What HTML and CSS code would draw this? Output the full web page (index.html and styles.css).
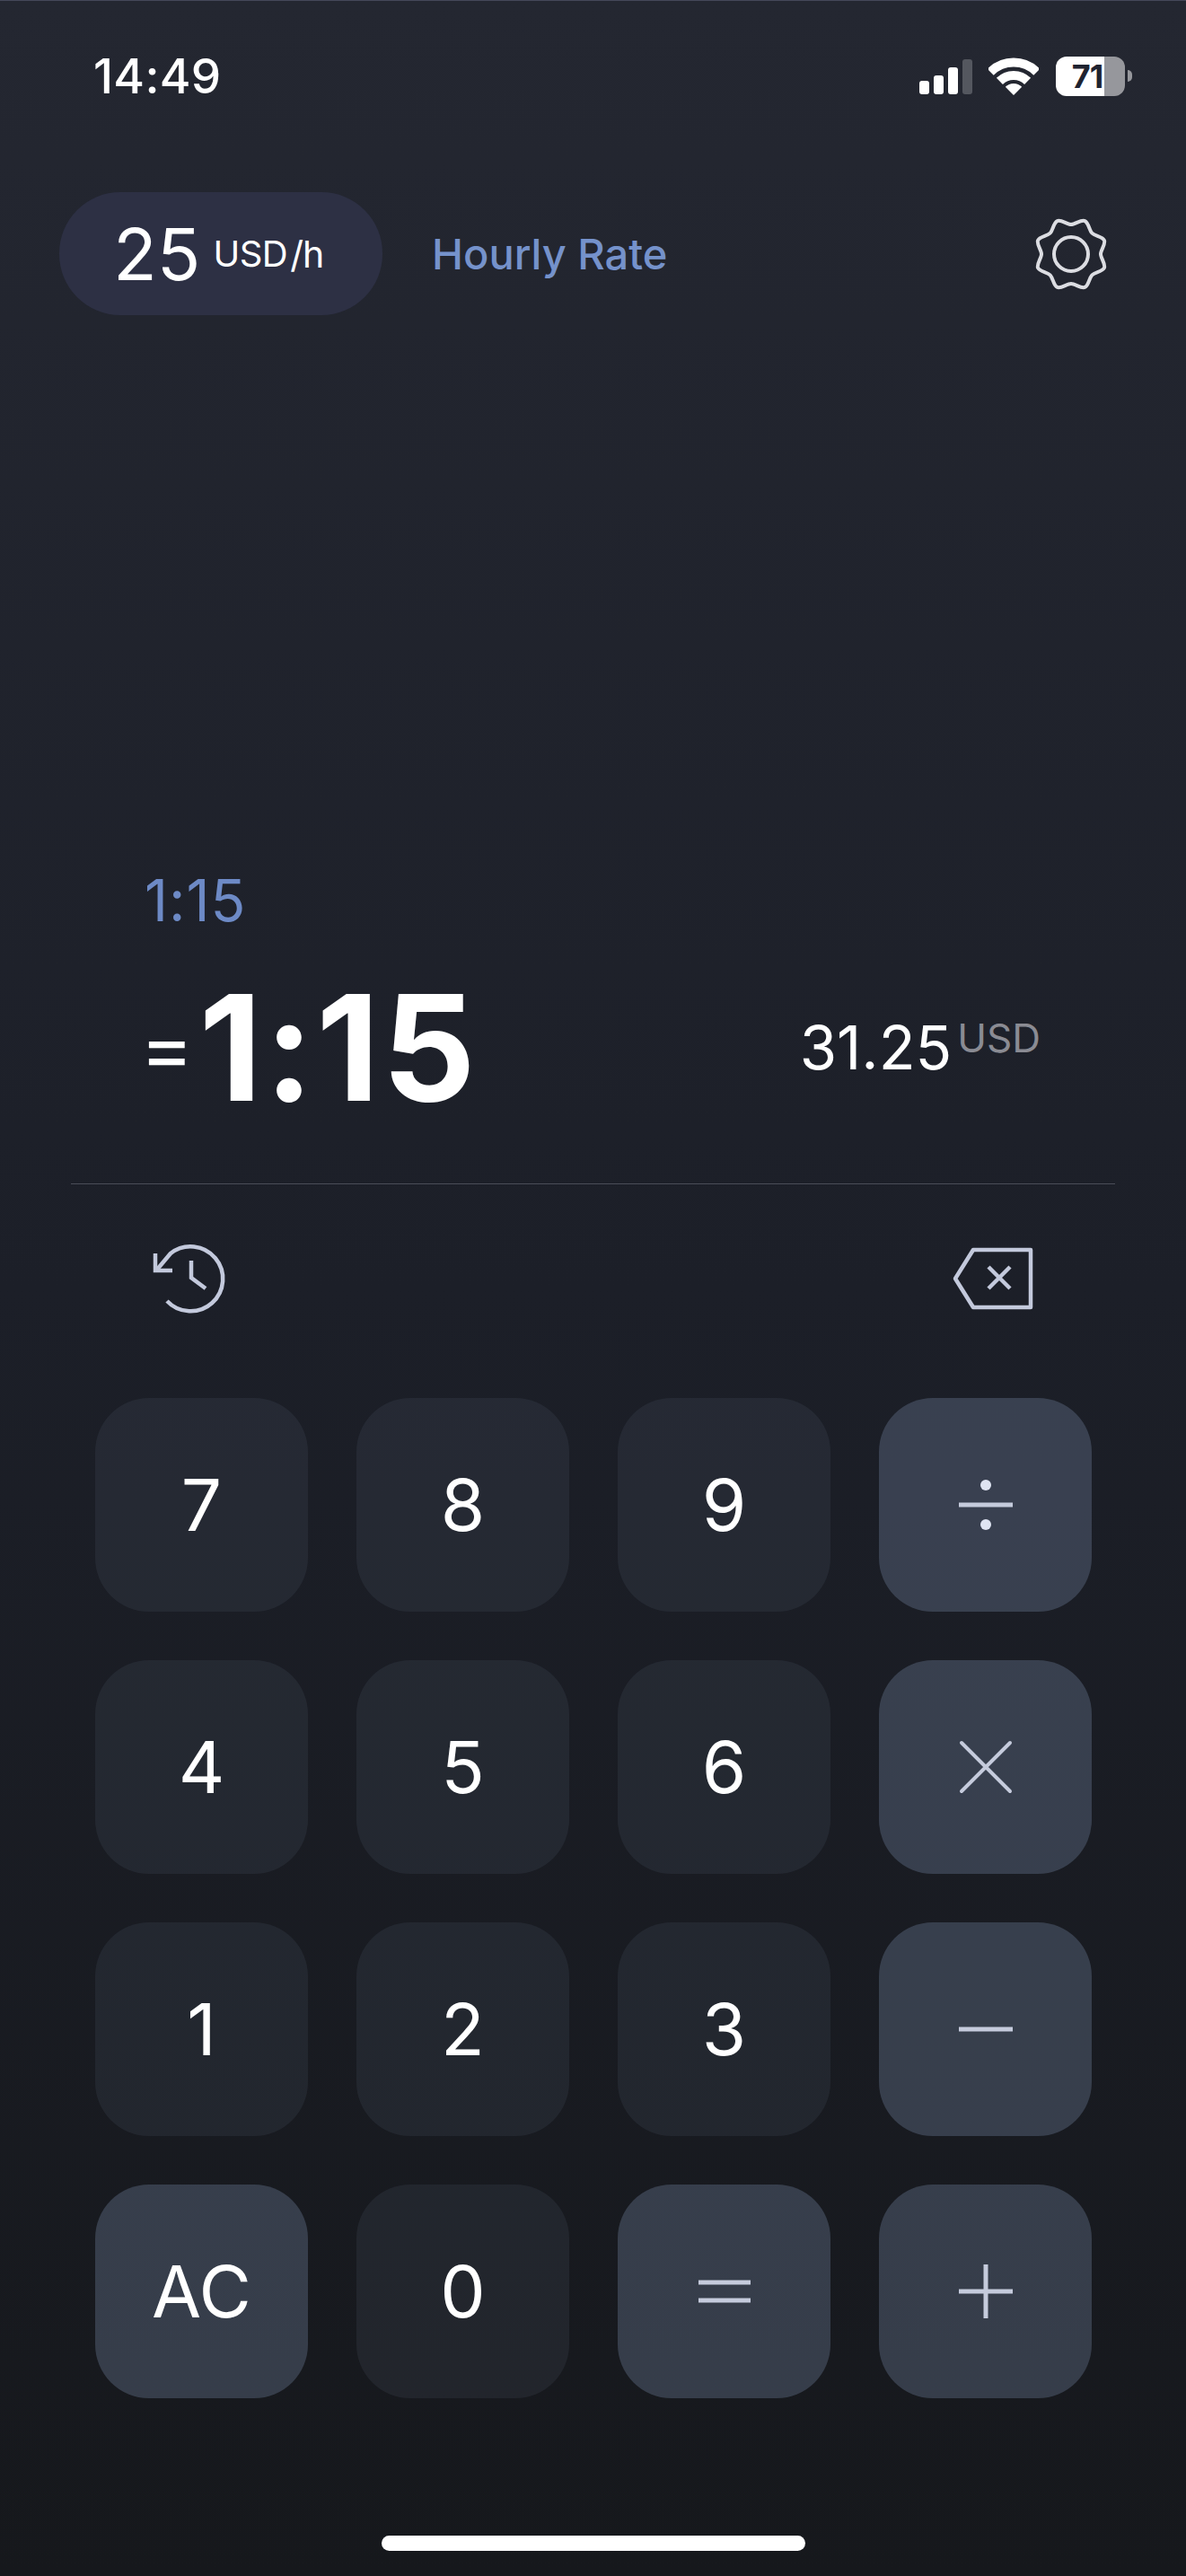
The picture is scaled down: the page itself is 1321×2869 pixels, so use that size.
FILE: index.html
```html
<!DOCTYPE html>
<html lang="en">
<head>
    <meta charset="UTF-8">
    <meta name="viewport" content="width=device-width, initial-scale=1.0">
    <title>Hourly Rate Calculator</title>
    <link rel="stylesheet" href="styles.css">
</head>
<body>

<div class="status-bar">
    <span class="clock">14:49</span>
    <div class="status-icons">
        <div class="signal">
            <span class="bar bar-1"></span>
            <span class="bar bar-2"></span>
            <span class="bar bar-3"></span>
            <span class="bar bar-4"></span>
        </div>
        <svg class="wifi" width="56" height="43" viewBox="0 0 56 43" fill="none" stroke="#fff" stroke-width="10">
            <path d="M2.2 17.2A36.5 36.5 0 0 1 53.8 17.2"/>
            <path d="M12.4 27.4A22 22 0 0 1 43.6 27.4"/>
            <path d="M28 43L18.8 33.8A13 13 0 0 1 37.2 33.8Z" fill="#fff" stroke="none"/>
        </svg>
        <div class="battery">
            <div class="battery-body">71</div>
            <span class="battery-cap"></span>
        </div>
    </div>
</div>

<header class="rate-row">
    <div class="rate-pill">
        <span class="rate-value">25</span>
        <span class="rate-unit">USD</span>
        <span class="rate-per">/h</span>
    </div>
    <span class="rate-label">Hourly Rate</span>
    <svg class="gear" width="82" height="82" viewBox="-41 -41 82 82" fill="none" stroke="#dcdde2" stroke-width="4">
        <path d="M0 -33C4.5 -33 11.15 -38.68 15.31 -36.96C19.47 -35.24 20.15 -26.51 23.33 -23.33C26.51 -20.15 35.24 -19.47 36.96 -15.31C38.68 -11.15 33 -4.5 33 0C33 4.5 38.68 11.15 36.96 15.31C35.24 19.47 26.51 20.15 23.33 23.33C20.15 26.51 19.47 35.24 15.31 36.96C11.15 38.68 4.5 33 0 33C-4.5 33 -11.15 38.68 -15.31 36.96C-19.47 35.24 -20.15 26.51 -23.33 23.33C-26.51 20.15 -35.24 19.47 -36.96 15.31C-38.68 11.15 -33 4.5 -33 0C-33 -4.5 -38.68 -11.15 -36.96 -15.31C-35.24 -19.47 -26.51 -20.15 -23.33 -23.33C-20.15 -26.51 -19.47 -35.24 -15.31 -36.96C-11.15 -38.68 -4.5 -33 0 -33Z"/>
        <circle r="19"/>
    </svg>
</header>

<main class="display">
    <div class="expression">1:15</div>
    <div class="result-row">
        <div class="result-time">
            <span class="equals">=</span>
            <span class="time-value">1:15</span>
        </div>
        <div class="result-money">
            <span class="money-value">31.25</span>
            <span class="money-unit">USD</span>
        </div>
    </div>
</main>

<div class="divider"></div>

<div class="tools">
    <svg width="86" height="84" viewBox="0 0 86 84" fill="none" stroke="#c3c9dc" stroke-width="4.5">
        <path d="M6 33L22 14A36 36 0 1 1 18 67"/>
        <path d="M5 14V33H24"/>
        <path d="M45 22V41L61 53"/>
    </svg>
    <svg width="92" height="72" viewBox="0 0 92 72" fill="none" stroke="#c3c9dc" stroke-width="4.5" stroke-linejoin="round">
        <path d="M24 4H88V68H24L4 36Z"/>
        <path d="M41 23L65 47M65 23L41 47"/>
    </svg>
</div>

<section class="keypad">
    <button class="key">7</button>
    <button class="key">8</button>
    <button class="key">9</button>
    <button class="key op">
        <svg width="60" height="60" viewBox="0 0 60 60" fill="#dfe4f2" stroke="#c5cbdc" stroke-width="5">
            <path d="M0 30H60"/>
            <circle cx="30" cy="8" r="6" stroke="none"/>
            <circle cx="30" cy="52" r="6" stroke="none"/>
        </svg>
    </button>

    <button class="key">4</button>
    <button class="key">5</button>
    <button class="key">6</button>
    <button class="key op">
        <svg width="60" height="60" viewBox="0 0 60 60" fill="none" stroke="#c5cbdc" stroke-width="4" stroke-linecap="round">
            <path d="M3 3L57 57M57 3L3 57"/>
        </svg>
    </button>

    <button class="key">1</button>
    <button class="key">2</button>
    <button class="key">3</button>
    <button class="key op">
        <svg width="60" height="60" viewBox="0 0 60 60" fill="none" stroke="#c5cbdc" stroke-width="5">
            <path d="M0 30H60"/>
        </svg>
    </button>

    <button class="key op">AC</button>
    <button class="key">0</button>
    <button class="key op">
        <svg width="60" height="60" viewBox="0 0 60 60" fill="none" stroke="#c5cbdc" stroke-width="5">
            <path d="M1 20H59M1 40H59"/>
        </svg>
    </button>
    <button class="key op">
        <svg width="60" height="60" viewBox="0 0 60 60" fill="none" stroke="#c5cbdc" stroke-width="5">
            <path d="M0 30H60M30 0V60"/>
        </svg>
    </button>
</section>

<div class="home-bar"></div>

</body>
</html>
```

FILE: styles.css
```css
/* Page */
body {
    box-sizing: border-box;
    display: flex;
    flex-direction: column;
    height: 2869px;
    margin: 0;
    overflow: hidden;
    background: linear-gradient(180deg, #242731 0%, #1c1f28 50%, #16181c 100%);
    color: #fff;
    font-family: "Inter", "Liberation Sans", sans-serif;
}

/* Status bar */
.status-bar {
    box-sizing: border-box;
    display: flex;
    align-items: center;
    justify-content: space-between;
    height: 168px;
    padding: 0 60px 0 104px;
    border-top: 1px solid #45485a;
}

.clock {
    font-size: 53px;
    font-weight: 500;
    line-height: 60px;
    letter-spacing: 0.3px;
}

.status-icons {
    display: flex;
    align-items: center;
}

.signal {
    display: flex;
    align-items: flex-end;
    gap: 5px;
    height: 40px;
}

.bar {
    width: 11px;
    border-radius: 3px;
    background-color: #fff;
}

.bar-1 { height: 15px; }
.bar-2 { height: 21px; }
.bar-3 { height: 30px; }
.bar-4 { height: 39px; background-color: #54575f; }

.wifi {
    margin: 0 19px 0 18px;
}

.battery {
    display: flex;
    align-items: center;
    gap: 3px;
}

.battery-body {
    box-sizing: border-box;
    width: 77px;
    height: 44px;
    padding-right: 7px;
    border-radius: 12px;
    background: linear-gradient(90deg, #fff 70%, #96979c 70%);
    color: #1f2330;
    font-size: 36px;
    font-weight: 700;
    line-height: 44px;
    text-align: center;
    letter-spacing: -1px;
}

.battery-cap {
    width: 5px;
    height: 13px;
    border-radius: 0 6px 6px 0;
    background-color: #96979c;
}

/* Hourly rate row */
.rate-row {
    display: flex;
    align-items: center;
    margin-top: 46px;
    padding: 0 87px 0 66px;
}

.rate-pill {
    box-sizing: border-box;
    display: flex;
    align-items: center;
    width: 360px;
    height: 137px;
    padding-left: 60px;
    border-radius: 68px;
    background-color: #2d3044;
}

.rate-value {
    margin-right: 14px;
    font-size: 80px;
    line-height: 100px;
}

.rate-unit {
    font-size: 40px;
    letter-spacing: -0.5px;
}

.rate-per {
    margin-left: 3px;
    font-size: 41px;
    letter-spacing: -1px;
}

.rate-label {
    margin-left: 55px;
    color: #7592cb;
    font-size: 47px;
    font-weight: 500;
}

.gear {
    margin-left: auto;
}

/* Display */
.display {
    flex: 1;
    display: flex;
    flex-direction: column;
    justify-content: flex-end;
    padding: 0 88px 0 161px;
}

.expression {
    margin-bottom: 51px;
    color: #6d8ac6;
    font-size: 64px;
    line-height: 62px;
    letter-spacing: 1px;
}

.result-row {
    display: flex;
    align-items: center;
    justify-content: space-between;
    padding: 0 74px 70px 0;
}

.result-time {
    display: flex;
    align-items: center;
}

.equals {
    margin: 0 6px 0 -5px;
    font-size: 90px;
    line-height: 70px;
}

.time-value {
    font-size: 163px;
    font-weight: 700;
    line-height: 163px;
    letter-spacing: 3px;
}

.result-money {
    display: flex;
    align-items: flex-start;
}

.money-value {
    font-size: 67px;
    line-height: 68px;
}

.money-unit {
    margin: 2px 0 0 6px;
    color: #8a8b93;
    font-size: 44px;
    line-height: 42px;
}

.divider {
    height: 1px;
    margin: 0 79px;
    background-color: #4a4d57;
}

/* History and backspace */
.tools {
    display: flex;
    align-items: center;
    justify-content: space-between;
    height: 210px;
    margin-bottom: 28px;
    padding: 0 169px 0 168px;
}

/* Keypad */
.keypad {
    display: grid;
    grid-template-columns: repeat(4, 237px);
    grid-auto-rows: 238px;
    gap: 54px;
    margin-left: 106px;
}

.key {
    display: flex;
    align-items: center;
    justify-content: center;
    padding: 0;
    border: none;
    border-radius: 60px;
    background-color: rgba(90, 100, 120, 0.17);
    color: #fff;
    font-family: inherit;
    font-size: 80px;
    line-height: 1;
}

.key.op {
    background-color: rgba(108, 125, 152, 0.37);
}

.home-bar {
    width: 472px;
    height: 17px;
    margin: 153px auto 28px;
    border-radius: 9px;
    background-color: #fff;
}
```
